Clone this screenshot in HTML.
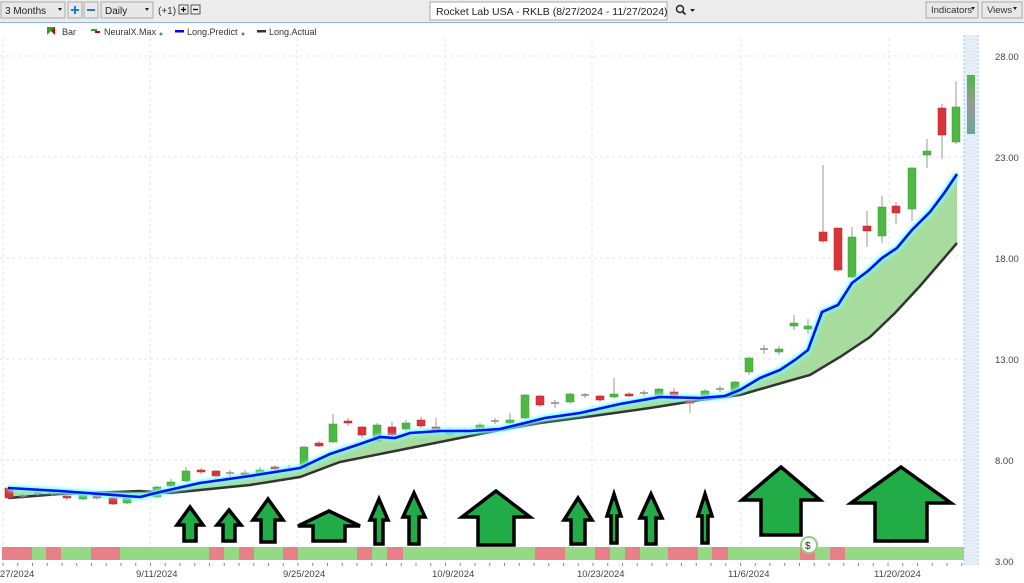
<!DOCTYPE html>
<html><head><meta charset="utf-8"><style>
body{margin:0;width:1024px;height:583px;overflow:hidden;background:#fff;font-family:"Liberation Sans",sans-serif;}
svg{position:absolute;left:0;top:0}
</style></head><body>
<svg width="1024" height="583" xmlns="http://www.w3.org/2000/svg" font-family="Liberation Sans, sans-serif">
<defs>
<pattern id="h" width="3" height="3" patternUnits="userSpaceOnUse"><rect width="3" height="3" fill="#e6eef8"/><rect width="1" height="1" fill="#d4e0ef"/></pattern>
<filter id="glow"><feGaussianBlur stdDeviation="1.5"/></filter>
</defs>
<rect x="0" y="0" width="1024" height="22" fill="#ececec"/>
<rect x="0" y="22" width="1024" height="1" fill="#8cb8e0"/>
<rect x="1" y="2" width="64" height="16" fill="#e8e8e8" stroke="#aaa"/>
<text x="5" y="14" font-size="10" fill="#222">3 Months</text>
<path d="M58 8l4 0l-2 3z" fill="#222"/>
<rect x="68" y="2" width="14" height="16" fill="#e8e8e8" stroke="#aaa"/>
<path d="M71 10h8M75 6v8" stroke="#1e7cd6" stroke-width="2"/>
<rect x="84" y="2" width="14" height="16" fill="#e8e8e8" stroke="#aaa"/>
<path d="M87 10h8" stroke="#1e7cd6" stroke-width="2"/>
<rect x="101" y="2" width="52" height="16" fill="#e8e8e8" stroke="#aaa"/>
<text x="105" y="14" font-size="10" fill="#222">Daily</text>
<path d="M145 8l4 0l-2 3z" fill="#222"/>
<text x="158" y="14" font-size="10" fill="#333">(+1)</text>
<rect x="179" y="5" width="9" height="9" fill="#eee" stroke="#555"/><path d="M181 9.5h5M183.5 7v5" stroke="#000" stroke-width="1.3"/>
<rect x="191" y="5" width="9" height="9" fill="#eee" stroke="#555"/><path d="M193 9.5h5" stroke="#000" stroke-width="1.3"/>
<rect x="430" y="2" width="237" height="18" fill="#fff" stroke="#aaa"/>
<text x="436" y="15" font-size="10.5" fill="#222">Rocket Lab USA - RKLB (8/27/2024 - 11/27/2024)</text>
<circle cx="680" cy="9" r="3.5" fill="none" stroke="#222" stroke-width="1.4"/><path d="M682.5 11.5l3 3" stroke="#222" stroke-width="1.6"/>
<path d="M690 9l5 0l-2.5 3z" fill="#222"/>
<rect x="926" y="2" width="52" height="16" fill="#e8e8e8" stroke="#aaa"/>
<text x="931" y="13" font-size="9.5" fill="#333">Indicators</text><path d="M971 7l4 0l-2 3z" fill="#222"/>
<rect x="982" y="2" width="40" height="16" fill="#e8e8e8" stroke="#aaa"/>
<text x="987" y="13" font-size="9.5" fill="#333">Views</text><path d="M1013 7l4 0l-2 3z" fill="#222"/>
<path d="M47 27h8v8z" fill="#c00"/><path d="M47 27h8l-8 8z" fill="#2a2"/>
<text x="62" y="35" font-size="9" fill="#333">Bar</text>
<rect x="91" y="29" width="6" height="2" fill="#2a2"/><rect x="95" y="31" width="5" height="2" fill="#c00"/>
<text x="104" y="35" font-size="9" fill="#333">NeuralX.Max</text><circle cx="161" cy="34" r="1.5" fill="#4a8ab0"/>
<rect x="175" y="30" width="9" height="2.5" fill="#00f"/>
<text x="187" y="35" font-size="9" fill="#333">Long.Predict</text><circle cx="243" cy="34" r="1.5" fill="#4a8ab0"/>
<rect x="257" y="30" width="9" height="2.5" fill="#333"/>
<text x="269" y="35" font-size="9" fill="#333">Long.Actual</text>
<g stroke="#e6e6e6" stroke-dasharray="3,3" stroke-width="1">
<path d="M0 56H975M0 157H975M0 258H975M0 359H975M0 460H975"/>
<path d="M3 38V565M150 38V565M297 38V565M445 38V565M592 38V565M741 38V565M889 38V565"/>
</g>
<rect x="964" y="35" width="14" height="530" fill="url(#h)"/>
<path d="M964 35V565M978 35V565" stroke="#9cc3e8" stroke-dasharray="2,2"/>
<polygon fill="#a7dc9e" points="8,488 60,491 140,497 160,492 200,483 250,476 300,468 330,454 360,444 380,437 395,438 410,433 440,431 470,431 500,429 525,423 545,418 580,413 620,404 660,397 700,398 725,396 740,390 760,378 780,370 795,360 808,350 822,312 838,305 852,283 868,271 882,258 897,248 912,230 930,212 945,192 957,174 957,243 945,257 920,286 895,313 870,337 840,357 810,375 785,382 740,395 700,400 650,408 600,415 540,423 500,430 450,440 400,450 340,462 300,477 250,485 170,493 140,491 60,494 8,498"/>
<polyline fill="none" stroke="#333" stroke-width="2.5" points="8,498 60,494 140,491 170,493 250,485 300,477 340,462 400,450 450,440 500,430 540,423 600,415 650,408 700,400 740,395 785,382 810,375 840,357 870,337 895,313 920,286 945,257 957,243"/>
<g id="c"></g>
<polyline fill="none" stroke="#7ff" stroke-width="6" filter="url(#glow)" points="8,488 60,491 140,497 160,492 200,483 250,476 300,468 330,454 360,444 380,437 395,438 410,433 440,431 470,431 500,429 525,423 545,418 580,413 620,404 660,397 700,398 725,396 740,390 760,378 780,370 795,360 808,350 822,312 838,305 852,283 868,271 882,258 897,248 912,230 930,212 945,192 957,174"/>
<polyline fill="none" stroke="#0010f0" stroke-width="2.6" points="8,488 60,491 140,497 160,492 200,483 250,476 300,468 330,454 360,444 380,437 395,438 410,433 440,431 470,431 500,429 525,423 545,418 580,413 620,404 660,397 700,398 725,396 740,390 760,378 780,370 795,360 808,350 822,312 838,305 852,283 868,271 882,258 897,248 912,230 930,212 945,192 957,174"/>
<g fill="#22ac48" stroke="#000" stroke-width="3.5" stroke-linejoin="miter" id="ar"></g>
<g id="st"></g>
<circle cx="809" cy="545" r="8" fill="#fff" stroke="#8dd17e" stroke-width="2"/>
<text x="805" y="549" font-size="10" fill="#222">$</text>
<g font-size="9.5" fill="#444">
<text x="995" y="60">28.00</text><text x="995" y="161">23.00</text><text x="995" y="262">18.00</text><text x="995" y="363">13.00</text><text x="995" y="464">8.00</text><text x="995" y="565">3.00</text>
<text x="-8" y="577">8/27/2024</text><text x="136" y="577">9/11/2024</text><text x="283" y="577">9/25/2024</text><text x="432" y="577">10/9/2024</text><text x="577" y="577">10/23/2024</text><text x="728" y="577">11/6/2024</text><text x="874" y="577">11/20/2024</text>
</g>
</svg>
<script>
var ns="http://www.w3.org/2000/svg";
function el(p,t,a){var e=document.createElementNS(ns,t);for(var k in a)e.setAttribute(k,a[k]);p.appendChild(e);return e;}
var C=[[9,488,498,486,499,'r'],[23,496,497,494,499,'d'],[38,493,494,491,496,'d'],[52,493,494,491,496,'d'],[67,496,498,494,500,'r'],[83,494,499,492,500,'g'],[97,495,498,493,500,'r'],[113,498,504,496,505,'r'],[127,497,503,496,504,'g'],[142,497,498,495,500,'d'],[157,487,497,486,498,'g'],[171,482,486,479,487,'g'],[186,471,481,467,482,'g'],[201,470,472,468,474,'r'],[216,471,476,470,478,'r'],[230,473,474,470,477,'d'],[245,473,475,470,477,'r'],[260,470,474,467,476,'g'],[275,467,468,465,470,'r'],[289,469,470,465,472,'d'],[304,447,468,446,469,'g'],[319,443,446,441,447,'r'],[333,424,442,414,443,'g'],[348,421,423,418,426,'r'],[362,427,435,426,438,'r'],[377,425,441,423,442,'g'],[392,427,435,422,436,'r'],[406,423,429,420,431,'g'],[421,420,426,417,428,'r'],[436,427,431,418,432,'r'],[450,431,434,428,436,'g'],[465,431,432,428,434,'d'],[480,425,432,423,433,'g'],[495,421,422,418,424,'d'],[510,420,423,413,424,'g'],[525,395,418,394,419,'g'],[540,396,405,395,407,'r'],[555,403,404,400,408,'d'],[570,394,402,393,404,'g'],[585,395,396,393,398,'d'],[600,396,400,395,402,'r'],[614,394,397,378,398,'g'],[629,394,396,392,397,'r'],[644,393,394,390,396,'d'],[659,389,396,388,398,'g'],[674,392,399,388,400,'r'],[690,400,403,398,413,'r'],[705,391,399,389,400,'g'],[720,389,390,386,392,'d'],[735,382,392,381,394,'g'],[749,358,372,357,375,'g'],[764,349,350,345,354,'d'],[779,349,352,346,355,'g'],[794,323,326,315,330,'g'],[808,326,329,319,334,'g'],[823,232,241,165,243,'r'],[838,228,270,228,272,'r'],[852,237,277,227,278,'g'],[867,226,231,211,247,'r'],[882,207,236,196,243,'g'],[896,206,213,202,224,'r'],[912,168,209,167,221,'g'],[927,151,155,139,168,'g'],[942,108,135,104,159,'r'],[956,107,142,81,144,'g']];
var g=document.getElementById('c');
C.forEach(function(c){var col=c[5]=='r'?'#d8343a':c[5]=='g'?'#4db843':'#888';
el(g,'line',{x1:c[0],x2:c[0],y1:c[3],y2:c[4],stroke:'#999','stroke-width':1});
if(c[5]=='d'){el(g,'line',{x1:c[0]-4,x2:c[0]+4,y1:c[1],y2:c[1],stroke:'#888','stroke-width':1.5});}
else el(g,'rect',{x:c[0]-4,y:c[1],width:8,height:Math.max(2,c[2]-c[1]),fill:col,stroke:col=='#d8343a'?'#b22':'#3a9a35','stroke-width':0.5});});
var gr=el(g,'linearGradient',{id:'gg',x1:0,y1:0,x2:0,y2:1});el(gr,'stop',{offset:0,'stop-color':'#4db843'});el(gr,'stop',{offset:0.5,'stop-color':'#999'});el(gr,'stop',{offset:1,'stop-color':'#6a9'});
el(g,'rect',{x:967,y:75,width:8,height:59,fill:'url(#gg)'});
var A=[[190,507,541,26,12,525],[229,510,541,24,12,525],[268,499,542,30,14,520],[329,511,541,62,32,526],[379,499,544,18,8,520],[414,493,544,22,10,517],[496,491,545,68,36,517],[578,498,544,28,14,520],[614,494,543,14,6,516],[651,494,544,22,10,518],[705,494,543,14,6,516],[781,467,535,78,40,500],[901,467,541,100,52,503]];
var ga=document.getElementById('ar');
A.forEach(function(a){var x=a[0],t=a[1],b=a[2],w=a[3]/2,s=a[4]/2,h=a[5];
el(ga,'path',{d:'M'+x+' '+t+'L'+(x+w)+' '+h+'L'+(x+s)+' '+h+'L'+(x+s)+' '+b+'L'+(x-s)+' '+b+'L'+(x-s)+' '+h+'L'+(x-w)+' '+h+'Z'});});
var S=[[2,32,'r'],[32,46,'g'],[46,61,'r'],[61,91,'g'],[91,120,'r'],[120,209,'g'],[209,224,'r'],[224,239,'g'],[239,254,'r'],[254,283,'g'],[283,298,'r'],[298,357,'g'],[357,372,'r'],[372,387,'g'],[387,403,'r'],[403,535,'g'],[535,565,'r'],[565,595,'g'],[595,610,'r'],[610,625,'g'],[625,640,'r'],[640,668,'g'],[668,698,'r'],[698,712,'g'],[712,728,'r'],[728,800,'g'],[800,815,'r'],[815,830,'g'],[830,845,'r'],[845,964,'g']];
var gs=document.getElementById('st');
S.forEach(function(s){el(gs,'rect',{x:s[0],y:547,width:s[1]-s[0],height:13,fill:s[2]=='r'?'#e8808a':'#95d885'});});
for(var x=3;x<975;x+=14.75)el(gs,'line',{x1:x,x2:x,y1:563,y2:566,stroke:'#888'});
</script>
</body></html>
